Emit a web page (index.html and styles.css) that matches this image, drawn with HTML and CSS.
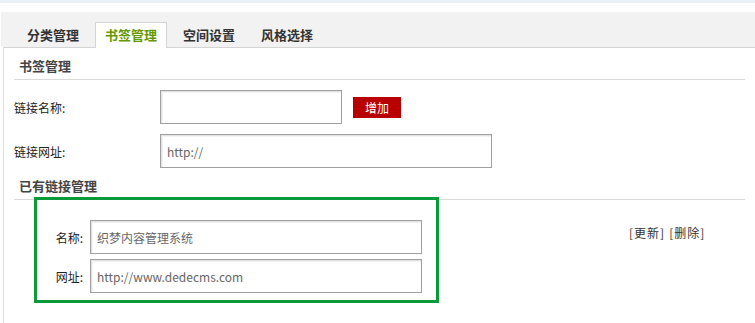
FILE: index.html
```html
<!DOCTYPE html>
<html lang="zh">
<head>
<meta charset="utf-8">
<title>书签管理</title>
<link rel="stylesheet" href="styles.css">
</head>
<body>
<div class="strip"></div>
<div class="tabbar">
  <div class="tab">分类管理</div>
  <div class="tab active">书签管理</div>
  <div class="tab">空间设置</div>
  <div class="tab">风格选择</div>
</div>
<div class="panel">
  <div class="section">
    <div class="sec-head">书签管理</div>
    <div class="form-row first">
      <label class="label">链接名称:</label>
      <input class="field short" type="text" value="">
      <button class="btn-add" type="button">增加</button>
    </div>
    <div class="form-row">
      <label class="label">链接网址:</label>
      <input class="field long" type="text" value="http://">
    </div>
    <div class="sec-head">已有链接管理</div>
    <div class="link-row">
      <div class="link-box">
        <div class="box-row">
          <span class="box-label">名称:</span>
          <input class="field box-field" type="text" value="织梦内容管理系统">
        </div>
        <div class="box-row second">
          <span class="box-label">网址:</span>
          <input class="field box-field" type="text" value="http://www.dedecms.com">
        </div>
      </div>
      <div class="actions"><span class="act">[更新]</span><span class="act">[删除]</span></div>
    </div>
  </div>
</div>
</body>
</html>
```

FILE: styles.css
```css
html, body {
  margin: 0;
  padding: 0;
  background: #fff;
}
body {
  font-family: "Noto Sans CJK SC", "Noto Sans", sans-serif;
  font-size: 12px;
  color: #333;
  overflow: hidden;
  height: 323px;
}
.strip {
  height: 3px;
  background: #eaf1f8;
}
.tabbar {
  margin-top: 9px;
  margin-left: 1px;
  height: 35px;
  background: #f2f2f2;
  display: flex;
  align-items: flex-end;
  padding-left: 16px;
  gap: 6px;
}
.tab {
  box-sizing: border-box;
  width: 72px;
  height: 25px;
  line-height: 24px;
  text-align: center;
  font-size: 13px;
  font-weight: bold;
  color: #333;
  border: 1px solid transparent;
  border-bottom: none;
}
.tab.active {
  background: #fff;
  border-color: #d4d4d4;
  color: #669900;
  height: 26px;
  margin-bottom: -1px;
  position: relative;
  z-index: 1;
}
.panel {
  margin-left: 3px;
  border-left: 1px solid #dcdcdc;
  border-top: 1px solid #d4d4d4;
  height: 276px;
}
.section {
  margin: 0 10px;
}
.sec-head {
  box-sizing: border-box;
  height: 32px;
  padding-top: 5px;
  padding-left: 5px;
  line-height: 26px;
  font-size: 13px;
  font-weight: bold;
  color: #444;
  border-bottom: 1px solid #d9d9d9;
}
.form-row {
  display: flex;
  align-items: center;
  margin-top: 10px;
}
.label {
  width: 146px;
  color: #222;
}
.field {
  box-sizing: border-box;
  height: 34px;
  border: 1px solid #a0a0a0;
  box-shadow: inset 1px 1px 0 #e2e2e2, inset 2px 2px 0 #f3f3f3;
  padding: 0 6px;
  font: inherit;
  font-size: 12px;
  color: #666;
  background: #fff;
  outline: none;
  margin: 0;
}
.short {
  width: 182px;
}
.long {
  width: 332px;
}
.btn-add {
  margin-left: 11px;
  width: 48px;
  height: 21px;
  border: none;
  padding: 0;
  background: #b80000;
  color: #fff;
  font: inherit;
  font-size: 12px;
}
.link-row {
  display: flex;
  align-items: flex-start;
}
.link-box {
  box-sizing: border-box;
  width: 405px;
  height: 106px;
  margin-top: -3px;
  margin-left: 20px;
  border: 3px solid #0a9a3a;
  background: #fff;
  padding-top: 20px;
  position: relative;
}
.box-row {
  display: flex;
  align-items: center;
}
.box-row.second {
  margin-top: 5px;
}
.box-label {
  width: 46px;
  text-align: right;
  padding-right: 7px;
  color: #222;
}
.box-field {
  width: 332px;
}
.actions {
  margin-left: 190px;
  margin-top: 25px;
  line-height: 16px;
  color: #333;
  display: flex;
  gap: 4px;
}
.act {
  letter-spacing: 1px;
}
```
